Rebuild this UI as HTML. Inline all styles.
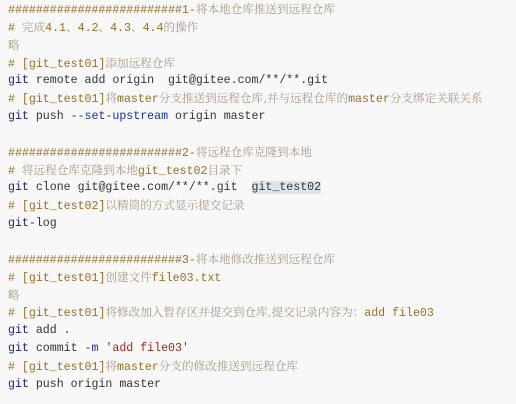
<!DOCTYPE html>
<html><head><meta charset="utf-8"><style>
html,body{margin:0;padding:0;background:#f8f8f8;width:516px;height:404px;overflow:hidden}
.p{padding:1px 0 0 8px;font-family:"Liberation Mono","Noto Sans CJK SC",monospace;font-size:11.6px;color:#333}
.p div{height:17.85px;line-height:17.85px;overflow:visible;white-space:pre}
.c{color:#9a6e2a}
.z{color:#a89a8a;font-family:"Noto Serif CJK SC","Noto Sans CJK SC",serif}
.k{color:#221a77}
.b{color:#1c2fa0}
.s{color:#a2281c}
.h{background:#dde5ec}
</style></head><body><div class="p"><div><span class="c">#########################1-<span class="z">将本地仓库推送到远程仓库</span></span></div><div><span class="c"># <span class="z">完成</span>4.1<span class="z">、</span>4.2<span class="z">、</span>4.3<span class="z">、</span>4.4<span class="z">的操作</span></span></div><div><span class="z">略</span></div><div><span class="c"># [git_test01]<span class="z">添加远程仓库</span></span></div><div><span class="k">git</span> remote add origin  git@gitee.com/**/**.git</div><div><span class="c"># [git_test01]<span class="z">将</span>master<span class="z">分支推送到远程仓库,并与远程仓库的</span>master<span class="z">分支绑定关联关系</span></span></div><div><span class="k">git</span> push <span class="b">--set-upstream</span> origin master</div><div></div><div><span class="c">#########################2-<span class="z">将远程仓库克隆到本地</span></span></div><div><span class="c"># <span class="z">将远程仓库克隆到本地</span>git_test02<span class="z">目录下</span></span></div><div><span class="k">git</span> clone git@gitee.com/**/**.git  <span class="h">git_test02</span></div><div><span class="c"># [git_test02]<span class="z">以精简的方式显示提交记录</span></span></div><div><span class="k">git</span>-log</div><div></div><div><span class="c">#########################3-<span class="z">将本地修改推送到远程仓库</span></span></div><div><span class="c"># [git_test01]<span class="z">创建文件</span>file03.txt</span></div><div><span class="z">略</span></div><div><span class="c"># [git_test01]<span class="z">将修改加入暂存区并提交到仓库,提交记录内容为：</span>add file03</span></div><div><span class="k">git</span> add .</div><div><span class="k">git</span> commit <span class="b">-m</span> <span class="s">'add file03'</span></div><div><span class="c"># [git_test01]<span class="z">将</span>master<span class="z">分支的修改推送到远程仓库</span></span></div><div><span class="k">git</span> push origin master</div></div></body></html>
